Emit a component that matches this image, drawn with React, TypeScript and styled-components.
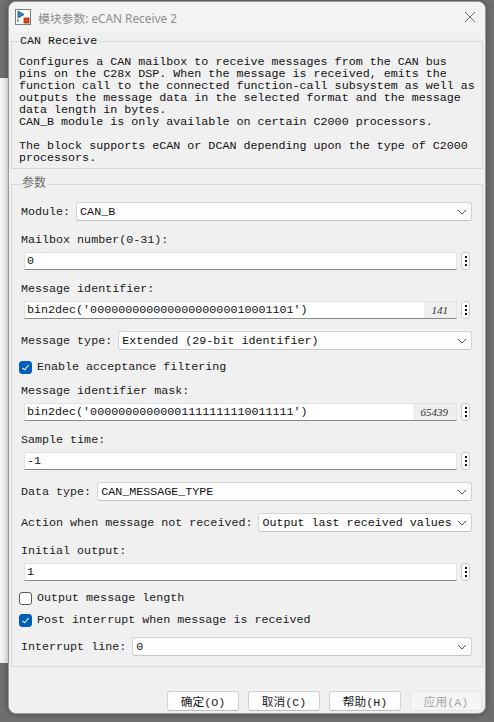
import React from "react";
import styled, { createGlobalStyle } from "styled-components";

const MONO = `"Liberation Mono", "Noto Sans CJK SC", monospace`;

const GlobalStyle = createGlobalStyle`
  html, body {
    margin: 0;
    padding: 0;
    overflow: hidden;
    background: #6f6f6f;
  }
`;

const Desktop = styled.div`
  position: relative;
  width: 494px;
  height: 722px;
  background: #6f6f6f;
  overflow: hidden;
`;

const BehindWindow = styled.div`
  position: absolute;
  left: 0;
  top: 78px;
  width: 8px;
  height: 585px;
  background: #f3f3f3;
`;

const Dialog = styled.div`
  position: absolute;
  left: 8px;
  top: 1px;
  width: 478px;
  height: 713px;
  box-sizing: border-box;
  display: flex;
  flex-direction: column;
  background: #f0f0f0;
  border: 1px solid #9a9a9a;
  border-radius: 8px;
  box-shadow: 0 0 6px rgba(0, 0, 0, 0.35);
  overflow: hidden;
`;

const TitleBar = styled.div`
  height: 30px;
  flex: none;
  display: flex;
  align-items: center;
  padding: 0 9px 0 6px;
  background: #f3f3f3;
`;

const TitleText = styled.div`
  margin-left: 7px;
  flex: 1;
  font-family: "Segoe UI", "Noto Sans", "Noto Sans CJK SC", sans-serif;
  font-size: 11.8px;
  color: #8e8e8e;
  white-space: nowrap;
`;

const Body = styled.div`
  flex: 1;
  display: flex;
  flex-direction: column;
  padding: 2px 2px 4px 2px;
`;

const Group = styled.fieldset<{ $pad: string; $mt?: number }>`
  margin: ${(p) => p.$mt || 0}px 0 0 0;
  padding: ${(p) => p.$pad};
  border: 1px solid #d7d7d7;
  min-width: 0;
`;

const Legend = styled.legend<{ $cjk?: boolean }>`
  padding: 0 1px;
  line-height: 14px;
  font-family: ${MONO};
  font-size: ${(p) => (p.$cjk ? "12px" : "11.7px")};
  color: ${(p) => (p.$cjk ? "#6a6a6a" : "#111")};
`;

const Description = styled.div`
  font-family: ${MONO};
  font-size: 11.7px;
  line-height: 12px;
  white-space: pre;
  color: #111;
`;

const Params = styled.div`
  display: flex;
  flex-direction: column;
  gap: 12px;
`;

const Label = styled.div`
  font-family: ${MONO};
  font-size: 11.7px;
  line-height: 14px;
  color: #1a1a1a;
  white-space: pre;
`;

const SelectRow = styled.div`
  display: flex;
  align-items: center;
  gap: 6px;
`;

const SelectBox = styled.div`
  flex: 1;
  height: 19px;
  box-sizing: border-box;
  display: flex;
  align-items: center;
  padding: 0 4px 0 3px;
  background: #fdfdfd;
  border: 1px solid #d3d3d3;
  border-bottom-color: #c4c4c4;
  border-radius: 3px;
  font-family: ${MONO};
  font-size: 11.7px;
  color: #111;
  white-space: pre;
`;

const SelectValue = styled.span`
  flex: 1;
`;

const Field = styled.div`
  display: flex;
  flex-direction: column;
  gap: 5px;
`;

const InputRow = styled.div`
  display: flex;
  gap: 4px;
  margin: 0 2px 0 3px;
`;

const TextInput = styled.div`
  flex: 1;
  height: 18px;
  box-sizing: border-box;
  display: flex;
  align-items: stretch;
  background: #ffffff;
  border: 1px solid #e2e2e2;
  border-bottom-color: #8a8a8a;
  font-family: ${MONO};
  font-size: 11.7px;
  color: #111;
  white-space: pre;
`;

const InputValue = styled.span`
  flex: 1;
  display: flex;
  align-items: center;
  padding-left: 2px;
`;

const EvalBadge = styled.span`
  display: flex;
  align-items: center;
  padding: 0 8px;
  background: #efefef;
  font-family: "Liberation Serif", serif;
  font-style: italic;
  font-size: 11px;
  color: #333;
`;

const DotsButton = styled.div`
  width: 9px;
  height: 18px;
  box-sizing: border-box;
  display: flex;
  flex-direction: column;
  align-items: center;
  justify-content: center;
  gap: 2px;
  background: #fafafa;
  border: 1px solid #c9c9c9;
  border-radius: 3px;
  > span {
    width: 2px;
    height: 2px;
    background: #111;
  }
`;

const CheckRow = styled.div`
  height: 10px;
  display: flex;
  align-items: center;
  gap: 5px;
  margin-left: -2px;
`;

const CheckBox = styled.span<{ $checked: boolean }>`
  width: 13px;
  height: 13px;
  flex: none;
  box-sizing: border-box;
  display: flex;
  align-items: center;
  justify-content: center;
  border-radius: 3px;
  background: ${(p) => (p.$checked ? "#005fb8" : "#fdfdfd")};
  border: 1px solid ${(p) => (p.$checked ? "#005fb8" : "#5c5c5c")};
`;

const ButtonBar = styled.div`
  margin-top: 24px;
  display: flex;
  justify-content: flex-end;
  gap: 9px;
  padding-right: 1px;
`;

const Button = styled.div<{ $disabled?: boolean }>`
  width: 72px;
  height: 20px;
  box-sizing: border-box;
  display: flex;
  align-items: center;
  justify-content: center;
  background: ${(p) => (p.$disabled ? "#f5f5f5" : "#fdfdfd")};
  border: 1px solid ${(p) => (p.$disabled ? "#e6e6e6" : "#d0d0d0")};
  border-bottom-color: ${(p) => (p.$disabled ? "#e6e6e6" : "#bdbdbd")};
  border-radius: 3px;
  font-family: ${MONO};
  font-size: 11.7px;
  color: ${(p) => (p.$disabled ? "#a3a3a3" : "#1a1a1a")};
  white-space: pre;
`;

const BlockIcon = () => (
  <svg width="16" height="16" viewBox="0 0 16 16">
    <rect x="0.5" y="0.5" width="15" height="15" fill="#fff" stroke="#7d7d7d" />
    <polygon points="3,2 3,9 9,5.5" fill="#2b86d8" stroke="#1b4f85" strokeWidth="0.8" />
    <line x1="3" y1="10" x2="3" y2="13" stroke="#555" strokeWidth="1" />
    <rect x="9" y="9" width="5" height="5" fill="#e0461f" stroke="#8a2a10" strokeWidth="0.8" />
  </svg>
);

const CloseIcon = () => (
  <svg width="12" height="12" viewBox="0 0 12 12">
    <path d="M1 1 L11 11 M11 1 L1 11" stroke="#6a6a6a" strokeWidth="1" fill="none" />
  </svg>
);

const Chevron = () => (
  <svg width="10" height="6" viewBox="0 0 10 6">
    <path d="M1 1 L5 5 L9 1" stroke="#555" strokeWidth="1" fill="none" />
  </svg>
);

const Check = () => (
  <svg width="9" height="9" viewBox="0 0 9 9">
    <path d="M1.5 4.8 L3.6 6.8 L7.6 2.2" stroke="#fff" strokeWidth="1.1" fill="none" />
  </svg>
);

const description = [
  "Configures a CAN mailbox to receive messages from the CAN bus",
  "pins on the C28x DSP. When the message is received, emits the",
  "function call to the connected function-call subsystem as well as",
  "outputs the message data in the selected format and the message",
  "data length in bytes.",
  "CAN_B module is only available on certain C2000 processors.",
  "",
  "The block supports eCAN or DCAN depending upon the type of C2000",
  "processors.",
].join("\n");

function Select({ label, value }: { label: string; value: string }) {
  return (
    <SelectRow>
      <Label>{label}</Label>
      <SelectBox>
        <SelectValue>{value}</SelectValue>
        <Chevron />
      </SelectBox>
    </SelectRow>
  );
}

function Edit({
  label,
  value,
  evaluated,
}: {
  label: string;
  value: string;
  evaluated?: string;
}) {
  return (
    <Field>
      <Label>{label}</Label>
      <InputRow>
        <TextInput>
          <InputValue>{value}</InputValue>
          {evaluated && <EvalBadge>{evaluated}</EvalBadge>}
        </TextInput>
        <DotsButton>
          <span />
          <span />
          <span />
        </DotsButton>
      </InputRow>
    </Field>
  );
}

function CheckOption({ label, checked }: { label: string; checked: boolean }) {
  return (
    <CheckRow>
      <CheckBox $checked={checked}>{checked && <Check />}</CheckBox>
      <Label>{label}</Label>
    </CheckRow>
  );
}

export default function App() {
  return (
    <>
      <GlobalStyle />
      <Desktop>
        <BehindWindow />
        <Dialog>
          <TitleBar>
            <BlockIcon />
            <TitleText>模块参数: eCAN Receive 2</TitleText>
            <CloseIcon />
          </TitleBar>
          <Body>
            <Group $pad="8px 7px 4px 7px">
              <Legend>CAN Receive</Legend>
              <Description>{description}</Description>
            </Group>
            <Group $pad="11px 10px 10px 9px" $mt={8}>
              <Legend $cjk>参数</Legend>
              <Params>
                <Select label="Module:" value="CAN_B" />
                <Edit label="Mailbox number(0-31):" value="0" />
                <Edit
                  label="Message identifier:"
                  value="bin2dec('00000000000000000000010001101')"
                  evaluated="141"
                />
                <Select label="Message type:" value="Extended (29-bit identifier)" />
                <CheckOption label="Enable acceptance filtering" checked />
                <Edit
                  label="Message identifier mask:"
                  value="bin2dec('00000000000001111111110011111')"
                  evaluated="65439"
                />
                <Edit label="Sample time:" value="-1" />
                <Select label="Data type:" value="CAN_MESSAGE_TYPE" />
                <Select
                  label="Action when message not received:"
                  value="Output last received values"
                />
                <Edit label="Initial output:" value="1" />
                <CheckOption label="Output message length" checked={false} />
                <CheckOption label="Post interrupt when message is received" checked />
                <Select label="Interrupt line:" value="0" />
              </Params>
            </Group>
            <ButtonBar>
              <Button>确定(O)</Button>
              <Button>取消(C)</Button>
              <Button>帮助(H)</Button>
              <Button $disabled>应用(A)</Button>
            </ButtonBar>
          </Body>
        </Dialog>
      </Desktop>
    </>
  );
}
